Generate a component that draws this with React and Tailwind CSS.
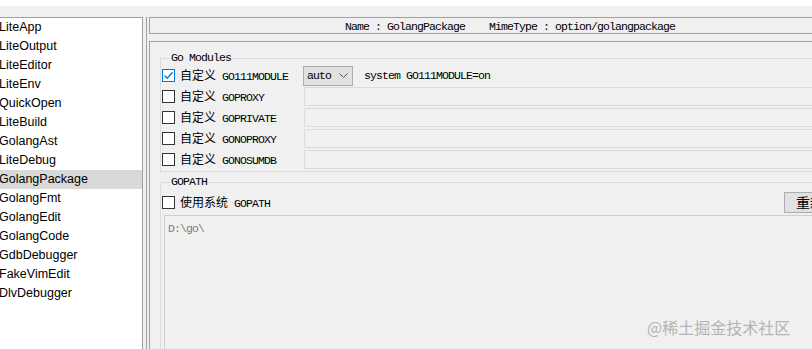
import React from "react";

const mono = { fontFamily: '"Liberation Mono", "Noto Sans CJK SC", monospace' };

const plugins = [
  "LiteApp", "LiteOutput", "LiteEditor", "LiteEnv", "QuickOpen", "LiteBuild", "GolangAst",
  "LiteDebug", "GolangPackage", "GolangFmt", "GolangEdit", "GolangCode", "GdbDebugger",
  "FakeVimEdit", "DlvDebugger",
];

function CheckBox({ checked }) {
  return (
    <span
      className={`w-[13px] h-[13px] shrink-0 border bg-white flex items-center justify-center ${
        checked ? "border-[#0078d7]" : "border-[#333333]"
      }`}
    >
      {checked && (
        <svg width="11" height="11" viewBox="0 0 11 11">
          <path d="M1.5 5.5 L4.2 8.2 L9.5 2.2" fill="none" stroke="#0078d7" strokeWidth="1.3" />
        </svg>
      )}
    </span>
  );
}

function Cjk({ children }) {
  return (
    <span className="tracking-normal text-[12px]" style={{ fontFamily: '"Noto Sans CJK SC", sans-serif' }}>
      {children}
    </span>
  );
}

function EnvRow({ name, checked, children }) {
  return (
    <div className="h-[21px] flex items-center leading-none">
      <label className="w-[141px] flex items-center gap-[5px] whitespace-pre">
        <CheckBox checked={checked} />
        <span>
          <Cjk>自定义</Cjk> {name}
        </span>
      </label>
      {children}
    </div>
  );
}

export default function App() {
  return (
    <div className="w-[812px] h-[349px] overflow-hidden bg-[#f0f0f0] text-[#000]">
      <div className="h-[6px] bg-white" />
      <div className="flex mt-[11px] h-[332px]">
        {/* 插件列表 */}
        <ul
          className="w-[143px] shrink-0 bg-white border-t border-r border-[#a0a0a0] text-[12.5px]"
          style={{ fontFamily: '"Liberation Sans", Arial, sans-serif' }}
        >
          {plugins.map((p) => (
            <li
              key={p}
              className={`h-[19px] leading-[19px] -ml-[1px] ${p === "GolangPackage" ? "bg-[#d9d9d9]" : ""}`}
            >
              {p}
            </li>
          ))}
        </ul>

        {/* 右侧设置面板 */}
        <div className="ml-[3px] border-l border-[#a0a0a0] pl-[2px] w-[700px] shrink-0" style={mono}>
          <div className="w-[722px] h-[17px] border border-[#a0a0a0] text-center text-[11.5px] leading-[17px] tracking-[-0.9px] whitespace-pre">
            Name : GolangPackage    MimeType : option/golangpackage
          </div>

          <div className="mt-[7px] h-[400px] w-[800px] border-t border-l border-[#a0a0a0] pl-[10px] text-[11.5px] tracking-[-0.9px]">
            <fieldset className="mt-[10px] border border-[#dcdcdc] pl-[1px] pb-[1px]">
              <legend className="ml-[8px] px-[1px] leading-[12px]">Go Modules</legend>
              <div className="pt-[1px]">
                <EnvRow name="GO111MODULE" checked>
                  <div className="w-[50px] h-[20px] bg-[#e1e1e1] border border-[#adadad] flex items-center justify-between pl-[3px] pr-[4px]">
                    <span>auto</span>
                    <svg width="9" height="6" viewBox="0 0 9 6">
                      <path d="M0.5 0.5 L4.5 4.5 L8.5 0.5" fill="none" stroke="#555" strokeWidth="1" />
                    </svg>
                  </div>
                  <span className="ml-[11px]">system GO111MODULE=on</span>
                </EnvRow>
                {["GOPROXY", "GOPRIVATE", "GONOPROXY", "GONOSUMDB"].map((n) => (
                  <EnvRow key={n} name={n}>
                    <div className="ml-[1px] w-[600px] h-[19px] border border-[#dcdcdc] bg-[#f0f0f0]" />
                  </EnvRow>
                ))}
              </div>
            </fieldset>

            <fieldset className="mt-[4px] border border-[#dcdcdc] pl-[1px]">
              <legend className="ml-[8px] px-[1px] leading-[12px]">GOPATH</legend>
              <div className="h-[21px] mt-[4px] flex items-center leading-none">
                <label className="flex items-center gap-[5px] whitespace-pre">
                  <CheckBox />
                  <span>
                    <Cjk>使用系统</Cjk> GOPATH
                  </span>
                </label>
                <div
                  className="ml-[514px] h-[21px] w-[60px] bg-[#e1e1e1] border border-[#adadad] pl-[11px] text-[14px] leading-[19px] tracking-normal whitespace-nowrap"
                  style={{ fontFamily: '"Noto Sans CJK SC", sans-serif' }}
                >
                  重新设置
                </div>
              </div>
              <div className="mt-[2px] ml-[2px] h-[200px] border border-[#cfcfcf] pl-[3px] pt-[4px] text-[#808080]">
                D:\go\
              </div>
            </fieldset>
          </div>
        </div>
      </div>

      <div
        className="absolute left-[647px] top-[315px] text-[16px] text-[#b4b4b4]"
        style={{ fontFamily: '"Noto Sans CJK SC", sans-serif' }}
      >
        @稀土掘金技术社区
      </div>
    </div>
  );
}
